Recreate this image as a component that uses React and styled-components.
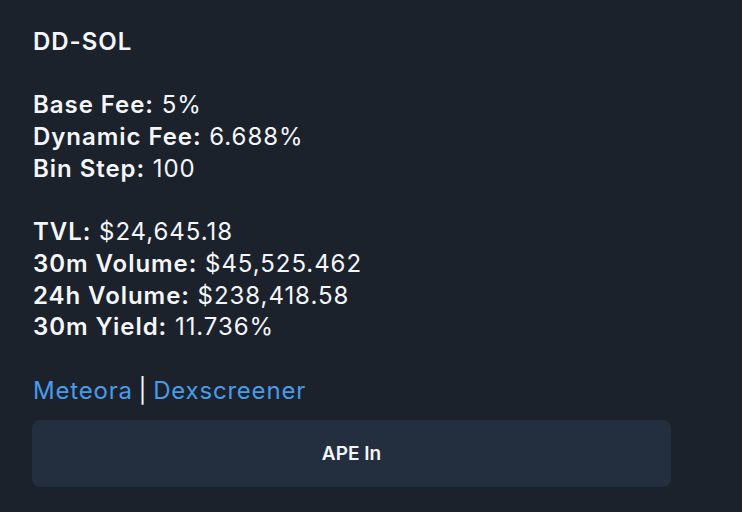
import styled, { createGlobalStyle } from 'styled-components'

const Global = createGlobalStyle`
  html, body {
    margin: 0;
    padding: 0;
    background: #1b222c;
  }
`

const pool = {
  name: 'DD-SOL',
  fees: [
    ['Base Fee', '5%'],
    ['Dynamic Fee', '6.688%'],
    ['Bin Step', '100'],
  ],
  stats: [
    ['TVL', '$24,645.18'],
    ['30m Volume', '$45,525.462'],
    ['24h Volume', '$238,418.58'],
    ['30m Yield', '11.736%'],
  ],
}

const App = () => {
  return (
    <Wrapper>
      <Global />
      <Message>
        <Title>{pool.name}</Title>
        <Block>
          {pool.fees.map(([label, value]) => (
            <Line key={label}>
              <b>{label}:</b> {value}
            </Line>
          ))}
        </Block>
        <Block>
          {pool.stats.map(([label, value]) => (
            <Line key={label}>
              <b>{label}:</b> {value}
            </Line>
          ))}
        </Block>
        <Links>
          <a href='#'>Meteora</a> | <a href='#'>Dexscreener</a>
        </Links>
      </Message>
      <Button>APE In</Button>
    </Wrapper>
  )
}

const Wrapper = styled.main`
  width: 742px;
  height: 512px;
  box-sizing: border-box;
  padding: 26px 71px 0 32px;
  font-family: Inter, 'Noto Sans', sans-serif;
  color: #f4f6f8;
  font-size: 24px;
  letter-spacing: 0.95px;
  line-height: 31.7px;
`

const Message = styled.div`
  padding-left: 1px;
  display: flex;
  flex-direction: column;
  gap: 31.7px;
`

const Title = styled.div`
  font-weight: 600;
`

const Block = styled.div`
  b {
    font-weight: 600;
  }
`

const Line = styled.div``

const Links = styled.div`
  word-spacing: -2px;
  a {
    color: #4a9be8;
    text-decoration: none;
    letter-spacing: 0.8px;
  }
`

const Button = styled.button`
  display: block;
  width: 100%;
  height: 67px;
  margin-top: 14px;
  border: none;
  border-radius: 8px;
  background: #232e3e;
  color: #f4f6f8;
  font-family: Inter, 'Noto Sans', sans-serif;
  font-size: 19px;
  font-weight: 600;
  letter-spacing: 0;
`

export default App
